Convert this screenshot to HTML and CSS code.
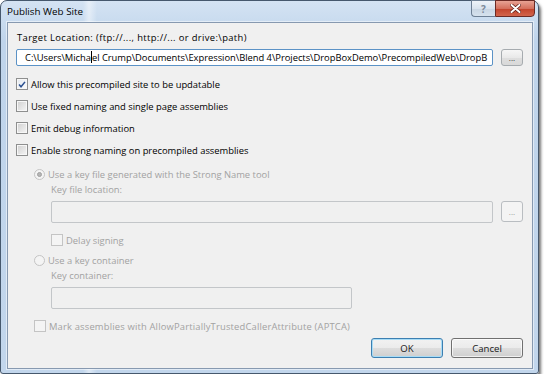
FILE: index.html
```html
<!DOCTYPE html>
<html lang="en">
<head>
  <meta charset="UTF-8">
  <title>Publish Web Site</title>
  <link rel="stylesheet" href="styles.css">
</head>
<body>
  <div class="window">
    <div class="titlebar">
      <span class="title">Publish Web Site</span>
      <div class="caption-buttons">
        <span class="cap help">?</span>
        <span class="cap close">
          <svg width="11" height="9" viewBox="0 0 11 9"><path d="M1.5 1 L9.5 8 M9.5 1 L1.5 8" stroke="#5a1a12" stroke-width="3.4" stroke-linecap="round"/><path d="M1.5 1 L9.5 8 M9.5 1 L1.5 8" stroke="#fff" stroke-width="2" stroke-linecap="round"/></svg>
        </span>
      </div>
    </div>

    <div class="client">
      <div class="label top-label">Target Location: (ftp://..., http://... or drive:\path)</div>
      <div class="field-row">
        <div class="textbox focused">C:\Users\Micha<span class="caret"></span>el Crump\Documents\Expression\Blend 4\Projects\DropBoxDemo\PrecompiledWeb\DropB</div>
        <button class="browse">...</button>
      </div>

      <div class="check first">
        <span class="box checked">
          <svg width="11" height="11" viewBox="0 0 11 11"><path d="M2.3 5.6 L4.4 8 L8.8 2.6" fill="none" stroke="#2a4f8f" stroke-width="1.7"/></svg>
        </span>
        Allow this precompiled site to be updatable
      </div>
      <div class="check"><span class="box"></span>Use fixed naming and single page assemblies</div>
      <div class="check"><span class="box"></span>Emit debug information</div>
      <div class="check"><span class="box"></span>Enable strong naming on precompiled assemblies</div>

      <div class="strong-group">
        <div class="radio first-radio"><span class="dot selected"></span>Use a key file generated with the Strong Name tool</div>
        <div class="sub">
          <div class="label dim">Key file location:</div>
          <div class="field-row sub-field">
            <div class="textbox disabled wide"></div>
            <button class="browse disabled">...</button>
          </div>
          <div class="check disabled delay"><span class="box"></span>Delay signing</div>
        </div>

        <div class="radio second-radio"><span class="dot"></span>Use a key container</div>
        <div class="sub">
          <div class="label dim">Key container:</div>
          <div class="field-row sub-field">
            <div class="textbox disabled short"></div>
          </div>
        </div>

        <div class="check disabled mark"><span class="box"></span>Mark assemblies with AllowPartiallyTrustedCallerAttribute (APTCA)</div>
      </div>

      <div class="footer">
        <button class="btn default">OK</button>
        <button class="btn">Cancel</button>
      </div>
    </div>
  </div>
</body>
</html>
```

FILE: styles.css
```css
body {
  margin: 0;
  background: #fff;
  font-family: "Open Sans", "Noto Sans", sans-serif;
  font-size: 9.4px;
  color: #000;
}
.window {
  box-sizing: border-box;
  width: 539px;
  height: 374px;
  border: 1px solid #46586d;
  border-radius: 7px 7px 3px 3px;
  background:
    linear-gradient(to right, rgba(255,255,255,0) 82px, rgba(255,255,255,.45) 88px, rgba(255,255,255,0) 96px),
    linear-gradient(to bottom, #d4e3f3, #bfd4eb 40px, #c2d6ec);
  box-shadow: 2px 3px 3px rgba(0,0,0,.55);
  padding: 0 5px 4px 6px;
  display: flex;
  flex-direction: column;
}
.titlebar {
  height: 21px;
  display: flex;
  align-items: flex-start;
}
.title {
  margin-top: 4px;
  font-size: 9.8px;
  color: #000;
}
.caption-buttons {
  margin-left: auto;
  margin-top: -1px;
  margin-right: -2px;
  display: flex;
}
.cap {
  height: 17px;
  display: flex;
  align-items: center;
  justify-content: center;
  border: 1px solid #6d7f94;
  box-sizing: border-box;
}
.help {
  width: 24px;
  border-radius: 0 0 0 4px;
  border-right: none;
  background: linear-gradient(#eef3f9, #d9e3ee 50%, #c8d5e3 51%, #d6e2ee);
  color: #7d8a99;
  font-size: 10px;
  font-weight: bold;
}
.close {
  width: 40px;
  border-radius: 0 0 4px 0;
  border-color: #6b2a24;
  background: linear-gradient(#e8a394, #d4705d 50%, #c2432b 51%, #d2654c);
}
.client {
  flex: 1;
  border: 1px solid #8799b0;
  box-shadow: 0 0 0 1px rgba(255,255,255,.5);
  background: #f0f0f0;
  padding: 7px 9px 10px 8px;
  display: flex;
  flex-direction: column;
}
.label {
  height: 16px;
  line-height: 16px;
  white-space: nowrap;
}
.top-label {
  padding-left: 1px;
  letter-spacing: .38px;
}
.dim {
  color: #a2a2a2;
}
.field-row {
  display: flex;
  gap: 8px;
  margin-top: 3px;
}
.textbox {
  box-sizing: border-box;
  height: 17px;
  border: 1px solid #adb2b5;
  border-radius: 2px;
  line-height: 15px;
  padding-left: 4px;
  white-space: nowrap;
  overflow: hidden;
  color: #000;
}
.textbox.focused {
  width: 478px;
  padding-left: 8px;
  letter-spacing: -.03px;
  border-color: #5b92c6;
  background: #fff;
}
.caret {
  display: inline-block;
  width: 1px;
  height: 12px;
  background: #000;
  vertical-align: -2px;
}
.browse {
  box-sizing: border-box;
  width: 22px;
  height: 17px;
  padding: 0;
  border: 1px solid #a6abaf;
  border-radius: 3px;
  background: linear-gradient(#f6f6f6, #e9e9e9 50%, #dedede 51%, #d9d9d9);
  font-family: inherit;
  font-size: 8px;
  line-height: 10px;
  color: #333;
}
.browse.disabled {
  height: 21px;
  background: #f4f4f4;
  border-color: #b9bdc1;
  color: #999;
}
.check, .radio {
  display: flex;
  align-items: center;
  height: 16px;
  white-space: nowrap;
}
.check {
  margin-top: 6px;
}
.check.first {
  margin-top: 10px;
}
.box {
  box-sizing: border-box;
  width: 12px;
  height: 12px;
  margin-right: 3px;
  border: 1px solid #8e8f8f;
  box-shadow: inset 0 0 0 1px #f7f7f7;
  background: linear-gradient(135deg, #cfcfcf, #f6f6f6);
  display: flex;
  align-items: center;
  justify-content: center;
}
.box.checked {
  background: linear-gradient(135deg, #e3e9f0, #fbfbfb);
}
.check.disabled {
  color: #a2a2a2;
}
.check.disabled .box {
  border-color: #c4c4c4;
  background: #f4f4f4;
  box-shadow: none;
}
.strong-group {
  padding-left: 18px;
  display: flex;
  flex-direction: column;
}
.radio {
  height: 15px;
  color: #a2a2a2;
}
.first-radio {
  margin-top: 9px;
}
.second-radio {
  margin-top: 5px;
}
.dot {
  box-sizing: border-box;
  width: 11px;
  height: 11px;
  margin-right: 3px;
  border: 1px solid #c4c4c4;
  border-radius: 50%;
  background: #f4f4f4;
  display: flex;
  align-items: center;
  justify-content: center;
}
.dot.selected::after {
  content: "";
  width: 5px;
  height: 5px;
  border-radius: 50%;
  background: #b5b5b5;
  border: 1px solid #a0a0a0;
  box-sizing: border-box;
}
.sub {
  padding-left: 17px;
  display: flex;
  flex-direction: column;
}
.sub-field {
  margin-top: 3px;
}
.textbox.disabled {
  height: 22px;
  border-color: #c3c6c9;
  background: #f0f0f0;
}
.textbox.wide {
  width: 443px;
}
.textbox.short {
  width: 301px;
}
.check.delay {
  margin-top: 9px;
}
.check.mark {
  margin-top: 9px;
  letter-spacing: .18px;
}
.footer {
  margin-top: auto;
  display: flex;
  justify-content: flex-end;
  gap: 8px;
}
.btn {
  box-sizing: border-box;
  width: 72px;
  height: 20px;
  padding: 0;
  border: 1px solid #707070;
  border-radius: 3px;
  background: linear-gradient(#f2f2f2, #ebebeb 50%, #dddddd 51%, #cfcfcf);
  box-shadow: inset 0 0 0 1px rgba(255,255,255,.7);
  font-family: inherit;
  font-size: 9.6px;
  color: #1a1a1a;
}
.btn.default {
  border-color: #3c7fb1;
  box-shadow: inset 0 0 0 1px #a8dcf6;
}
```
